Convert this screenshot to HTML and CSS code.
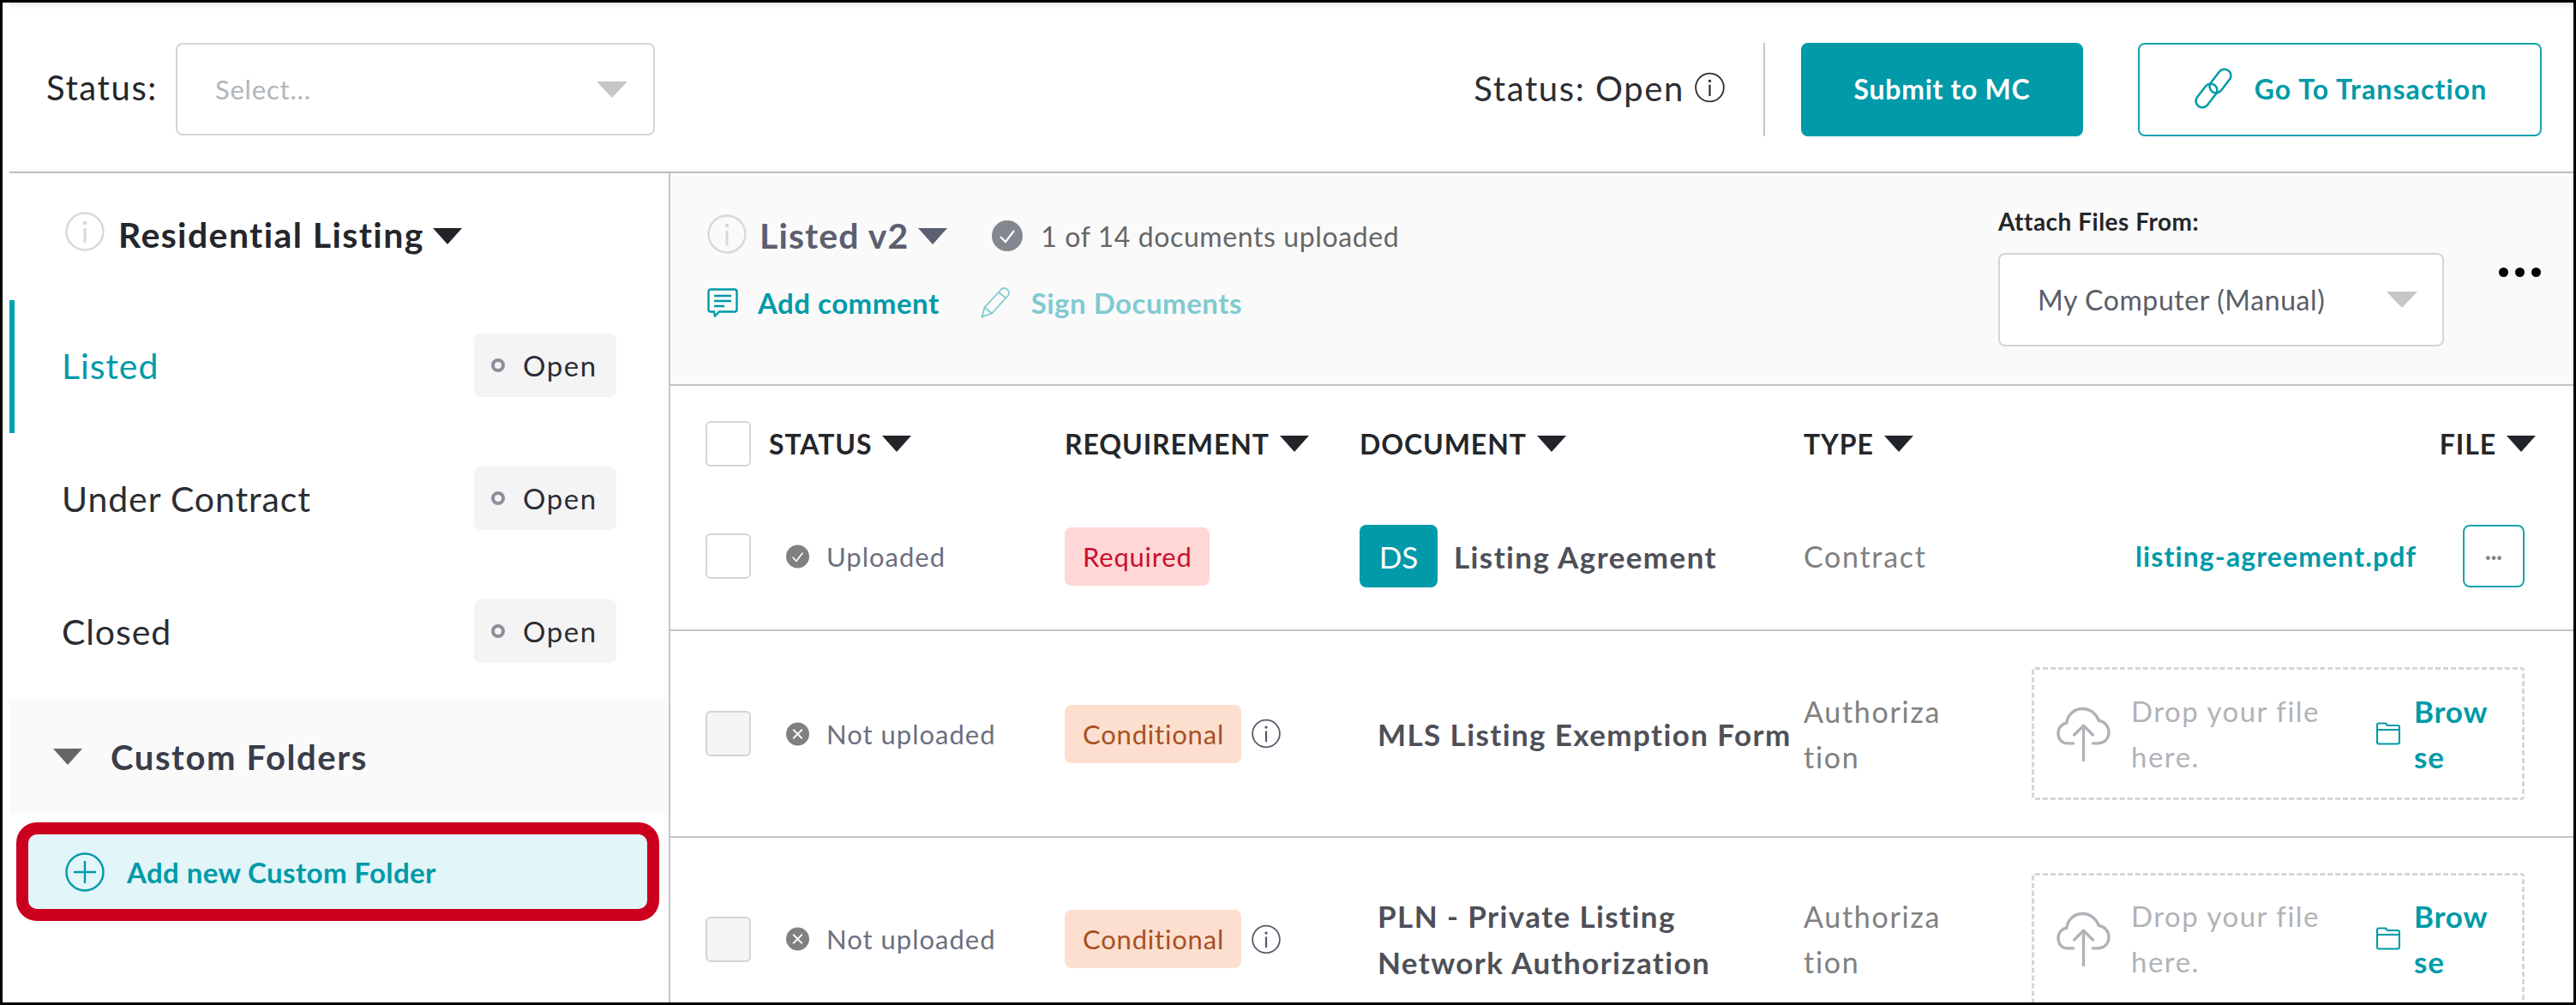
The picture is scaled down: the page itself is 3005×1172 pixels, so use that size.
FILE: index.html
```html
<!DOCTYPE html>
<html lang="en">
<head>
<meta charset="utf-8">
<title>Listing checklist</title>
<link rel="stylesheet" href="styles.css">
</head>
<body>
<svg class="defs" width="0" height="0" aria-hidden="true">
  <symbol id="i-info" viewBox="0 0 46 46"><circle cx="23" cy="23" r="21.5" fill="none" stroke="currentColor" stroke-width="2.4"/><circle cx="23" cy="13" r="2.2" fill="currentColor"/><path d="M23 20v15" fill="none" stroke="currentColor" stroke-width="3" stroke-linecap="round"/></symbol>
  <symbol id="i-check" viewBox="0 0 36 36"><circle cx="18" cy="18" r="18" fill="currentColor"/><path d="M10 19l6 6 10-13" fill="none" stroke="#fff" stroke-width="2.2"/></symbol>
  <symbol id="i-x" viewBox="0 0 36 36"><circle cx="18" cy="18" r="18" fill="currentColor"/><path d="M11 11l14 14M25 11L11 25" fill="none" stroke="#fff" stroke-width="2.4"/></symbol>
  <symbol id="i-cloud" viewBox="0 0 64 64"><path d="M20 43H13C6 43 2 38 2 31c0-6 4-11 10-12 1-10 9-17 19-17 9 0 16 6 19 14 7 1 12 7 12 14 0 8-6 13-13 13h-6" fill="none" stroke="currentColor" stroke-width="3.4" stroke-linecap="round"/><path d="M32 63V23M21 33l11-11 11 11" fill="none" stroke="currentColor" stroke-width="3.4" stroke-linecap="round" stroke-linejoin="round"/></symbol>
  <symbol id="i-folder" viewBox="0 0 28 28"><path d="M3 25.500h22a2 2 0 0 0 2-2V6a2 2 0 0 0-2-2H13L11 1.500H3a2 2 0 0 0-2 2v20a2 2 0 0 0 2 2zM1 9h26" fill="none" stroke="currentColor" stroke-width="2.200"/></symbol>
</svg>
<div class="frame">
  <header class="topbar">
    <span class="top-label">Status:</span>
    <div class="select select-top"><span class="placeholder">Select...</span><i class="caret caret-light"></i></div>
    <div class="top-right">
      <span class="top-status">Status: Open</span>
      <svg class="icon top-info"><use href="#i-info"/></svg>
      <span class="vline"></span>
      <button class="btn btn-solid">Submit to MC</button>
      <button class="btn btn-line">
        <svg class="link-icon" viewBox="0 0 48 48"><g fill="none" stroke="currentColor" stroke-width="2.500"><rect x="24.500" y="0" width="15" height="31" rx="7.500" transform="rotate(38 32 15.500)"/><rect x="8.500" y="17" width="15" height="31" rx="7.500" transform="rotate(38 16 32.500)"/></g></svg>
        Go To Transaction
      </button>
    </div>
  </header>
  <div class="body">
    <aside class="side">
      <div class="side-head">
        <svg class="icon info-lg"><use href="#i-info"/></svg>
        <span class="side-title">Residential Listing</span>
        <i class="caret caret-dark"></i>
      </div>
      <div class="stage active"><span>Listed</span><span class="chip"><i class="ring"></i>Open</span></div>
      <div class="stage"><span>Under Contract</span><span class="chip"><i class="ring"></i>Open</span></div>
      <div class="stage"><span>Closed</span><span class="chip"><i class="ring"></i>Open</span></div>
      <div class="custom-band"><i class="caret caret-mid"></i><span>Custom Folders</span></div>
      <div class="add-folder">
        <svg class="plus-icon" viewBox="0 0 46 46"><circle cx="23" cy="23" r="21.500" fill="none" stroke="currentColor" stroke-width="2.400"/><path d="M10 23h26M23 10v26" fill="none" stroke="currentColor" stroke-width="2.400"/></svg>
        <span>Add new Custom Folder</span>
      </div>
    </aside>
    <main class="main">
      <section class="sub">
        <div class="sub-left">
          <div class="sub-line">
            <svg class="icon info-lg"><use href="#i-info"/></svg>
            <span class="sub-title">Listed v2</span>
            <i class="caret caret-slate"></i>
            <svg class="icon check-lg"><use href="#i-check"/></svg>
            <span class="sub-count">1 of 14 documents uploaded</span>
          </div>
          <div class="sub-actions">
            <svg class="comment-icon" viewBox="0 0 36 34"><path d="M4 1.500h28a2.500 2.500 0 0 1 2.500 2.500v21a2.500 2.500 0 0 1-2.500 2.500H14L9 32.500l-1-5H4A2.500 2.500 0 0 1 1.500 25V4A2.500 2.500 0 0 1 4 1.500zM8 9h20M8 15h20M8 21h12" fill="none" stroke="currentColor" stroke-width="2.400"/></svg>
            <span class="act">Add comment</span>
            <svg class="pencil-icon" viewBox="0 0 36 36"><path d="M1.500 34.500l3-11L24 2.500c2-2 5-1.500 7 0s3 4.500 1 7L13 30.500zM4.500 23.500l8.500 7M21 6l9 7" fill="none" stroke="currentColor" stroke-width="1.800"/></svg>
            <span class="act act-muted">Sign Documents</span>
          </div>
        </div>
        <div class="attach">
          <div class="attach-label">Attach Files From:</div>
          <div class="select select-attach"><span>My Computer (Manual)</span><i class="caret caret-light"></i></div>
        </div>
        <div class="dots"><i></i><i></i><i></i></div>
      </section>

      <div class="grid head-row">
        <span class="box"></span>
        <span class="th">STATUS<i class="caret caret-dark"></i></span>
        <span class="th">REQUIREMENT<i class="caret caret-dark"></i></span>
        <span class="th">DOCUMENT<i class="caret caret-dark"></i></span>
        <span class="th">TYPE<i class="caret caret-dark"></i></span>
        <span class="th th-end">FILE<i class="caret caret-dark"></i></span>
      </div>

      <div class="grid row row-first">
        <span class="box"></span>
        <span class="state"><svg class="icon check-sm"><use href="#i-check"/></svg>Uploaded</span>
        <span class="req"><span class="tag tag-red">Required</span></span>
        <span class="doc"><span class="badge">DS</span><span class="doc-name">Listing Agreement</span></span>
        <span class="type">Contract</span>
        <span class="file"><a class="file-link">listing-agreement.pdf</a><span class="more">···</span></span>
      </div>

      <div class="grid row row-mid">
        <span class="box box-off"></span>
        <span class="state"><svg class="icon check-sm"><use href="#i-x"/></svg>Not uploaded</span>
        <span class="req"><span class="tag tag-orange">Conditional</span><svg class="icon info-sm"><use href="#i-info"/></svg></span>
        <span class="doc doc-plain"><span class="doc-name">MLS Listing Exemption Form</span></span>
        <span class="type">Authoriza<br>tion</span>
        <span class="file">
          <span class="drop">
            <svg class="icon cloud"><use href="#i-cloud"/></svg>
            <span class="drop-text">Drop your file<br>here.</span>
            <svg class="icon folder"><use href="#i-folder"/></svg>
            <span class="browse">Brow<br>se</span>
          </span>
        </span>
      </div>

      <div class="grid row row-last">
        <span class="box box-off"></span>
        <span class="state"><svg class="icon check-sm"><use href="#i-x"/></svg>Not uploaded</span>
        <span class="req"><span class="tag tag-orange">Conditional</span><svg class="icon info-sm"><use href="#i-info"/></svg></span>
        <span class="doc doc-plain"><span class="doc-name">PLN - Private Listing<br>Network Authorization</span></span>
        <span class="type">Authoriza<br>tion</span>
        <span class="file">
          <span class="drop">
            <svg class="icon cloud"><use href="#i-cloud"/></svg>
            <span class="drop-text">Drop your file<br>here.</span>
            <svg class="icon folder"><use href="#i-folder"/></svg>
            <span class="browse">Brow<br>se</span>
          </span>
        </span>
      </div>
    </main>
  </div>
</div>
</body>
</html>
```
FILE: styles.css
```css
* { box-sizing: border-box; }
html, body { margin: 0; padding: 0; background: #fff; }
body { font-family: "Lato", "Noto Sans", sans-serif; color: #2b2d33; }
.defs { position: absolute; }
.frame { width: 3005px; height: 1172px; border: 3px solid #000; padding-left: 8px; overflow: hidden; background: #fff; }
.icon { display: block; flex: none; }
.caret { display: block; flex: none; width: 0; height: 0; border-style: solid; border-color: transparent; border-width: 19px 17px 0; }
.caret-dark { border-top-color: #212529; }
.caret-light { border-top-color: #c6c6c6; border-width: 19px 18px 0; }
.caret-mid { border-top-color: #666; }
.caret-slate { border-top-color: #5c5f70; }

.topbar { height: 199px; padding: 47px 37px 0 43px; display: flex; align-items: flex-start; border-bottom: 2px solid #bcbdc4; box-shadow: inset 0 9px 9px -9px rgba(0,0,0,.18); }
.top-label { line-height: 105px; font-size: 40px; letter-spacing: 1.6px; color: #24262b; }
.select { display: flex; align-items: center; justify-content: space-between; background: #fff; border: 2px solid #d2d5d9; border-radius: 8px; }
.select-top { width: 559px; height: 108px; margin-left: 21px; padding: 0 30px 0 44px; }
.placeholder { font-size: 31px; letter-spacing: .8px; color: #b3b5b9; }
.top-right { margin-left: auto; display: flex; align-items: center; }
.top-status { padding-bottom: 4px; font-size: 40px; letter-spacing: 1.6px; color: #2b2d33; }
.top-info { width: 35px; height: 36px; margin: -6px 0 0 12px; color: #2b2d33; }
.vline { width: 2px; height: 109px; background: #c4c5c9; margin: 0 42px 0 45px; }
.btn { height: 109px; border-radius: 8px; font: 700 32px "Lato", sans-serif; letter-spacing: .7px; display: flex; align-items: center; justify-content: center; padding: 0 0 3px; }
.btn-solid { width: 329px; background: #009aa8; border: 0; color: #fff; }
.btn-line { width: 471px; margin-left: 64px; background: #fff; border: 2px solid #1aa3ae; color: #009aa8; gap: 24px; letter-spacing: 1.1px; }
.link-icon { width: 48px; height: 48px; flex: none; }

.body { display: flex; height: 968px; }
.side { width: 769px; flex: none; }
.side-head { height: 148px; padding: 45px 0 0 65px; display: flex; align-items: flex-start; }
.info-lg { width: 46px; height: 46px; color: #d5d8dd; }
.side-title { margin-left: 16px; padding-top: 4px; font-size: 41px; font-weight: 700; line-height: 46px; letter-spacing: 1.4px; color: #24262b; }
.side-head .caret { margin: 19px 0 0 10px; }
.stage { height: 155px; border-left: 6px solid transparent; padding: 0 61px 3px 55px; display: flex; align-items: center; justify-content: space-between; font-size: 41px; letter-spacing: .9px; color: #2b2d33; }
.stage.active { border-left-color: #00a3b0; color: #009aa8; }
.chip { width: 166px; height: 74px; background: #f4f4f5; border-radius: 8px; display: flex; align-items: center; padding-left: 20px; font-size: 33px; letter-spacing: 1.6px; color: #2b2d33; }
.ring { width: 16px; height: 16px; border: 4px solid #8c8f9a; border-radius: 50%; margin-right: 21px; }
.custom-band { height: 135px; margin-right: 2px; background: #fafafa; padding: 0 0 0 51px; display: flex; align-items: center; gap: 33px; font-size: 40px; font-weight: 700; letter-spacing: 1.6px; color: #3a3d4a; }
.add-folder { width: 750px; height: 115px; margin: 9px 0 0 8px; border: 14px solid #cb001f; border-radius: 24px; background: #e2f5f8; padding-left: 43px; display: flex; align-items: center; gap: 26px; font-size: 33px; font-weight: 700; letter-spacing: .4px; color: #009aa8; }
.plus-icon { width: 46px; height: 46px; flex: none; }

.main { flex: 1; min-width: 0; border-left: 2px solid #c4c5cb; }
.sub { height: 248px; background: #fafafa; border-bottom: 2px solid #c4c5cb; display: flex; align-items: flex-start; }
.sub-left { flex: 1; padding: 47px 0 0 43px; }
.sub-line { display: flex; align-items: center; height: 47px; }
.sub-title { margin-left: 15px; padding-top: 4px; font-size: 41px; font-weight: 700; letter-spacing: 1.1px; color: #5c5f70; }
.sub-line .caret { margin: 6px 0 0 11px; }
.check-lg { width: 36px; height: 36px; margin: 4px 0 0 52px; color: #84878f; }
.sub-count { margin-left: 21px; padding-top: 6px; font-size: 32px; letter-spacing: .6px; color: #666; }
.sub-actions { display: flex; align-items: center; margin-top: 39px; height: 36px; font-size: 33px; font-weight: 700; letter-spacing: .5px; color: #009aa8; }
.comment-icon { width: 36px; height: 34px; flex: none; }
.pencil-icon { width: 36px; height: 36px; flex: none; margin-left: 48px; color: #7fcbd0; }
.act { margin-left: 23px; }
.act-muted { color: #7fcbd0; }
.attach { width: 520px; flex: none; padding-top: 38px; }
.attach-label { height: 55px; font-size: 28px; font-weight: 700; line-height: 36px; letter-spacing: .5px; color: #24262b; }
.select-attach { height: 109px; padding: 0 29px 0 44px; font-size: 32px; letter-spacing: .6px; color: #5a5d68; }
.dots { width: 49px; flex: none; margin: 110px 38px 0 64px; display: flex; justify-content: space-between; }
.dots i { width: 11px; height: 11px; border-radius: 50%; background: #000; }

.grid { display: grid; grid-template-columns: 74px 345px 344px 518px 266px 575px; padding-left: 41px; align-items: center; }
.head-row { height: 135px; }
.row { border-bottom: 2px solid #c4c5cb; }
.row-first { height: 151px; padding-bottom: 22px; }
.row-mid { height: 241px; }
.row-last { height: 236px; border-bottom: 0; }
.box { display: block; width: 53px; height: 53px; background: #fff; border: 2px solid #d2d5d9; border-radius: 6px; }
.box-off { background: #f5f5f5; }
.th { display: flex; align-items: center; gap: 12px; font-size: 32px; font-weight: 700; letter-spacing: .9px; color: #24262b; }
.th-end { justify-content: flex-end; margin-right: -13px; }
.state { display: flex; align-items: center; padding-left: 20px; font-size: 31px; letter-spacing: 1px; color: #6b6f80; }
.check-sm { width: 27px; height: 28px; margin-right: 20px; color: #808080; }
.req { display: flex; align-items: center; }
.tag { height: 68px; border-radius: 8px; padding: 0 20px 0 21px; display: flex; align-items: center; font-size: 31px; letter-spacing: .8px; }
.tag-red { background: #ffd7d6; color: #c8102e; }
.tag-orange { background: #fddfd0; color: #a8501f; }
.info-sm { width: 34px; height: 35px; margin-left: 12px; color: #555a6b; }
.doc { display: flex; align-items: center; }
.doc-plain { padding-left: 21px; }
.badge { width: 91px; height: 73px; border-radius: 8px; background: #009aa8; color: #fff; font-size: 35px; margin-right: 19px; display: flex; align-items: center; justify-content: center; }
.doc-name { font-size: 35px; font-weight: 700; line-height: 54px; letter-spacing: 1.4px; color: #4e5058; white-space: nowrap; }
.type { font-size: 34px; line-height: 53px; letter-spacing: 1.7px; color: #808080; }
.file { display: flex; align-items: center; justify-content: flex-end; }
.file-link { font-size: 32px; font-weight: 700; letter-spacing: 1.1px; color: #009aa8; white-space: nowrap; }
.more { width: 72px; height: 73px; margin-left: 54px; flex: none; border: 2px solid #1aa3ae; border-radius: 8px; display: flex; align-items: center; justify-content: center; font-size: 24px; font-weight: 700; color: #808080; }
.drop { width: 575px; height: 155px; border: 3px dashed #d5d5d5; border-radius: 4px; padding-left: 26px; display: flex; align-items: center; flex: none; }
.cloud { width: 63px; height: 64px; color: #b0b2b8; }
.drop-text { margin-left: 24px; width: 286px; font-size: 33px; line-height: 53px; letter-spacing: 1.5px; color: #b1b3b8; }
.folder { width: 28px; height: 28px; color: #009aa8; }
.browse { margin-left: 16px; font-size: 35px; font-weight: 700; line-height: 53px; letter-spacing: .8px; color: #009aa8; }
```
